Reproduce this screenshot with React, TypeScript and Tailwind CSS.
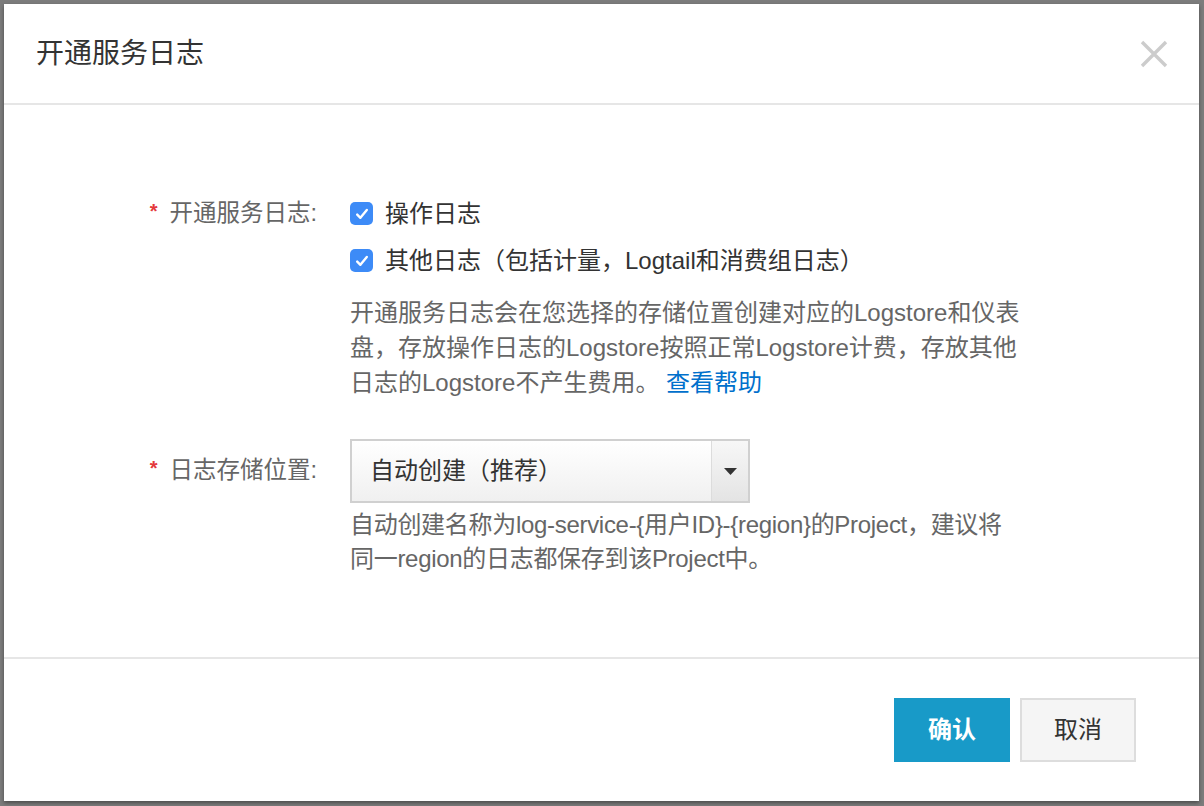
import React from "react";

const FONT = { fontFamily: '"Liberation Sans", "Noto Sans CJK SC", sans-serif' };

function CheckBox() {
  return (
    <span className="w-[23px] h-[23px] rounded-[5px] bg-[#3d8bf7] flex items-center justify-center shrink-0">
      <svg width="16" height="16" viewBox="0 0 16 16" fill="none">
        <path d="M3.2 8.6 L6.4 11.8 L12.8 4" stroke="#fff" strokeWidth="2.4" strokeLinecap="round" strokeLinejoin="round" />
      </svg>
    </span>
  );
}

function Label({ text }: { text: string }) {
  return (
    <div className="w-[187px] shrink-0 flex items-center justify-end text-[23.5px] text-[#666]">
      <span className="text-[#e4393c] text-[20px] font-bold mr-[12px] -mt-[6px]">*</span>
      <span>{text}:</span>
    </div>
  );
}

export default function App() {
  return (
    <div className="w-[1204px] h-[806px] bg-[#7c7c7c] pt-[4px] pl-[4px] pr-[5px] pb-[5px]" style={FONT}>
      <div className="h-full bg-white flex flex-col shadow-[0_2px_4px_rgba(0,0,0,0.4)]">
        {/* header */}
        <div className="h-[101px] shrink-0 border-b-2 border-[#e6e6e6] flex items-center justify-between pl-[32px] pr-[29px]">
          <h1 className="text-[28px] text-[#333] font-normal">开通服务日志</h1>
          <button className="w-[32px] h-[32px] flex items-center justify-center" aria-label="关闭">
            <svg width="28" height="28" viewBox="0 0 28 28">
              <path d="M2 2 L26 26 M26 2 L2 26" stroke="#cccccc" strokeWidth="3.4" />
            </svg>
          </button>
        </div>

        {/* body */}
        <div className="flex-1 pl-[126px] pt-[85px]">
          <div className="flex">
            <div className="h-[47px] flex items-center">
              <Label text="开通服务日志" />
            </div>
            <div className="ml-[33px] text-[24px]">
              <label className="h-[47px] flex items-center gap-[12px] text-[#333]">
                <CheckBox />
                <span>操作日志</span>
              </label>
              <label className="h-[47px] flex items-center gap-[12px] text-[#333]">
                <CheckBox />
                <span>其他日志（包括计量，Logtail和消费组日志）</span>
              </label>
              <p className="mt-[11px] leading-[35px] text-[#666] whitespace-nowrap">
                开通服务日志会在您选择的存储位置创建对应的Logstore和仪表
                <br />
                盘，存放操作日志的Logstore按照正常Logstore计费，存放其他
                <br />
                日志的Logstore不产生费用。 <a className="text-[#0070cc]">查看帮助</a>
              </p>
            </div>
          </div>

          <div className="flex mt-[39px]">
            <div className="h-[63px] flex items-center">
              <Label text="日志存储位置" />
            </div>
            <div className="ml-[33px] text-[24px]">
              <div className="w-[400px] h-[64px] border-2 border-[#d0d0d0] flex bg-gradient-to-b from-white to-[#f0f0f0]">
                <div className="flex-1 flex items-center pl-[18px] text-[#333] text-[24px]">自动创建（推荐）</div>
                <div className="w-[37px] border-l border-[#dcdcdc] bg-gradient-to-b from-[#f7f7f7] to-[#e4e4e4] flex items-center justify-center">
                  <svg width="13" height="7" viewBox="0 0 13 7">
                    <path d="M0 0 L13 0 L6.5 7 Z" fill="#333" />
                  </svg>
                </div>
              </div>
              <p className="mt-[5px] leading-[34px] text-[#666] whitespace-nowrap tracking-[-0.3px]">
                自动创建名称为log-service-{"{"}用户ID{"}"}-{"{"}region{"}"}的Project，建议将
                <br />
                同一region的日志都保存到该Project中。
              </p>
            </div>
          </div>
        </div>

        {/* footer */}
        <div className="h-[144px] shrink-0 border-t-2 border-[#e6e6e6] flex items-center justify-end gap-[10px] pr-[63px]">
          <button className="w-[116px] h-[64px] bg-[#189ac8] text-white text-[24px] font-bold">确认</button>
          <button className="w-[116px] h-[64px] bg-[#f5f5f5] border-2 border-[#dddddd] text-[#333] text-[24px]">取消</button>
        </div>
      </div>
    </div>
  );
}
